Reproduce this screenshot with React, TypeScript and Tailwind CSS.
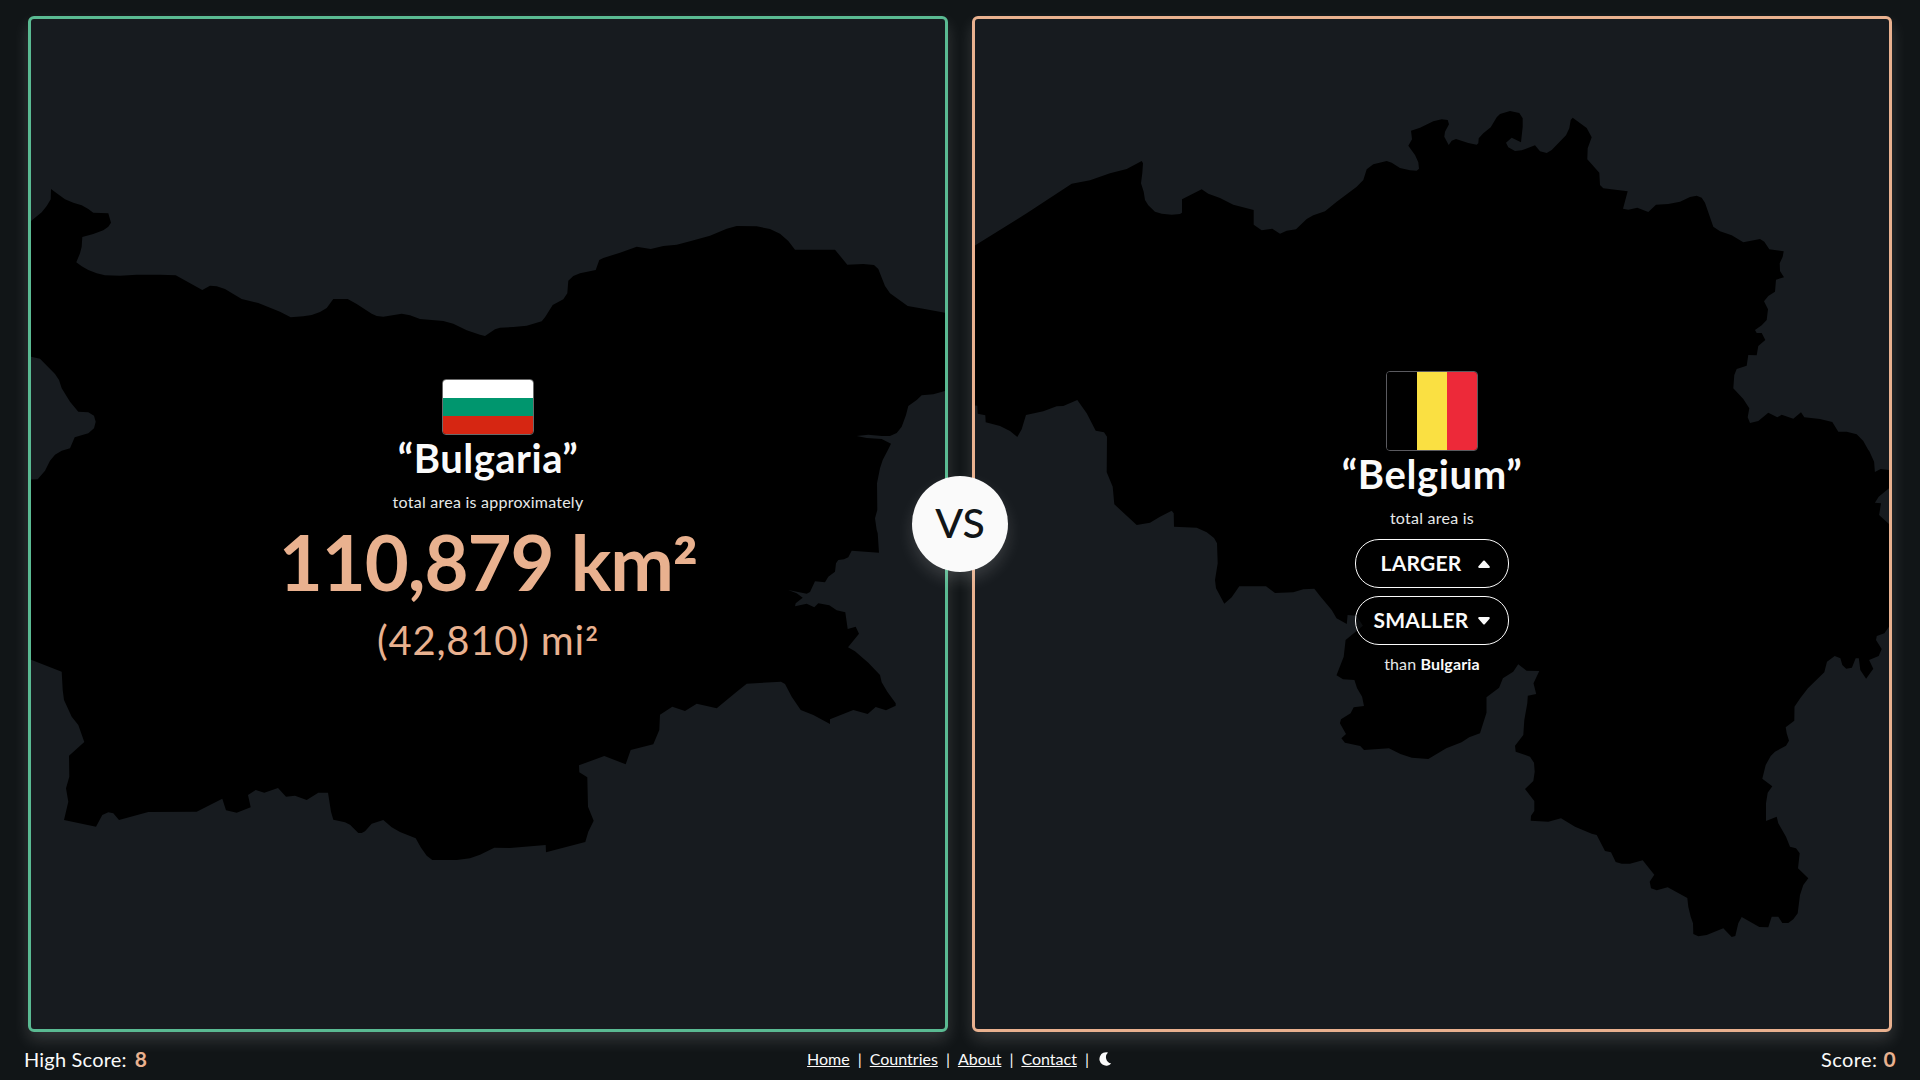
import type { ReactNode } from "react";
import { BsCaretDownFill, BsCaretUpFill } from "react-icons/bs";

type Stretch = { x: number; y: number; sx?: number; pts: string };

/** Turns stretches of border points (thirds of a pixel from an origin) into one closed path. */
function outline(stretches: Stretch[]): string {
  const points = stretches.flatMap(({ x, y, sx = 3, pts }) =>
    pts
      .trim()
      .split(/\s+/)
      .map((p) => {
        const [px, py] = p.split(",").map(Number);
        return `${(x + px / sx).toFixed(1)} ${(y + py / 3).toFixed(1)}`;
      }),
  );
  return `M${points.join("L")}Z`;
}

const BULGARIA = outline([
  {
    x: 0,
    y: 150,
    pts: "80,222 93,213 125,187 140,168 152,148 153,117 170,130 195,148 220,158 245,166 265,177 280,188 325,190 333,218 325,230 310,241 280,252 247,261 245,290 240,310 229,337 245,349 265,360 290,370 315,376 360,377 410,374 480,374 527,376 607,420 630,407 650,409 675,417 700,432 725,447 775,459 840,485 872,502 910,499 935,495 960,486 980,474 1000,447 1043,447 1070,462 1115,491 1130,498 1150,500 1205,491 1230,496 1260,507 1330,513 1360,521 1400,541 1440,554",
  },
  {
    x: 480,
    y: 200,
    pts: "15,408 45,388 60,383 100,381 140,377 185,364 195,352 218,315 250,298 262,280 265,242 280,228 300,220 347,210 358,180 370,174 420,158 470,140 512,147 550,138 590,134 630,124 690,107 740,86 770,78 830,79 870,87 900,101 925,123 945,149 1065,149 1102,194 1150,192 1182,195 1195,207 1215,258 1230,280 1283,318 1330,326 1396,338 1410,340 1410,570 1392,574 1360,583 1325,586 1310,600 1285,618 1278,645 1265,680 1250,699 1230,708 1205,708 1165,704 1130,708 1160,714 1205,717 1233,731 1225,748 1208,780 1200,805 1191,850 1192,930 1185,955 1190,990",
  },
  {
    x: 480,
    y: 520,
    pts: "1193,40 1197,98 1115,92 1105,112 1092,118 1075,120 1068,130 1065,155 1045,170 1035,187 1005,184 990,216 980,221 925,210 950,220 968,233 947,250 945,259 980,251 1003,262 1015,250 1048,256 1070,271 1096,277 1103,327 1127,320 1137,341 1104,382 1125,394 1165,428 1200,465 1205,487 1222,515 1247,550 1247,557 1218,571 1187,561 1163,582 1120,570 1050,598 1050,612 1000,585 962,570 935,530 915,492 903,485 800,491 770,515 710,565 650,551 615,573 577,560 540,584 538,630 520,673 452,690 437,733 373,708 297,736 298,757 322,772 324,860 341,902 325,935 316,966 198,997 197,975 90,984 43,983 0,1004",
  },
  {
    x: 0,
    y: 600,
    pts: "1410,775 1370,780 1297,780 1280,767 1262,742 1247,715 1200,696 1175,682 1150,660 1115,671 1095,694 1085,699 1075,699 1050,674 1035,667 1000,659 993,635 984,578 955,578 920,600 885,587 858,590 834,564 793,578 767,570 744,585 752,622 710,638 678,631 667,596 590,635 445,636 357,660 340,640 325,637 307,645 288,680 192,660 205,605 198,565 208,530 207,467 253,426 235,375 215,350 192,300 188,270 185,215 93,179 80,175",
  },
  {
    x: 0,
    y: 150,
    pts: "80,989 113,988 135,962 150,932 165,914 185,902 210,895 224,862 265,850 282,835 287,815 282,797 265,787 235,785 210,755 185,715 177,690 165,672 120,626 93,620 80,619",
  },
]);

const BELGIUM = outline([
  {
    x: 960,
    y: 90,
    pts: "36,470 46,466 200,370 335,281 390,271 450,250 500,237 545,213 549,220 547,250 543,280 551,305 555,330 565,346 585,365 605,371 635,374 660,372 666,368 666,328 725,298 745,311 780,324 820,344 881,360 881,404 905,421 937,416 960,431 980,422 1008,418 1040,387 1060,376 1095,364 1130,335 1190,290 1210,270 1220,238 1240,223 1280,213 1295,218 1320,234 1350,241",
  },
  {
    x: 1400,
    y: 90,
    pts: "50,242 57,236 55,217 45,195 25,167 36,148 33,122 60,113 100,94 125,88 143,90 147,103 135,125 133,140 146,165 155,152 168,147 205,159 230,164 235,160 236,145 250,130 272,112 290,82 300,72 330,63 358,69 368,85 368,110 363,157 335,143 318,158 325,172 345,183 365,181 405,166 420,184 440,189 455,180 498,136 508,115 512,90 518,83 560,114 575,142 563,175 562,208 598,248 600,285 610,295 683,304 669,356 685,359 712,353 745,366 768,344 805,342 840,335 870,321 890,317 905,323 915,338 940,410 960,424 995,436 1030,457 1080,447 1093,455 1108,478 1151,484 1148,500 1139,520 1140,543 1152,562 1128,569 1125,605 1105,618 1092,634 1104,658 1100,690 1085,706 1065,720 1070,729 1085,729 1096,750 1075,768 1070,796 1045,795 1040,827 1010,837 1003,855 1000,895 1030,927 1048,955 1043,982 1050,999 1075,993 1105,968 1132,982 1145,974 1180,986 1203,967 1213,982 1260,987 1297,996 1315,1025 1340,1025 1370,1033 1390,1053 1405,1080",
  },
  {
    x: 1320,
    y: 440,
    sx: 2.6133,
    pts: "1435,32 1448,65 1450,96 1465,87 1487,90 1500,91 1500,135 1487,145 1460,170 1450,188 1466,190 1461,225 1487,252 1500,262 1500,535 1487,560 1475,580 1455,588 1453,600 1468,627 1460,648 1435,660 1446,686 1427,716 1412,690 1408,655 1400,655 1390,683 1375,686 1365,675 1360,655 1345,648 1325,665 1318,697 1275,745 1255,775 1240,800",
  },
  {
    x: 1480,
    y: 700,
    pts: "943,62 917,82 920,100 927,122 918,137 885,155 872,168 857,195 847,236 877,259 863,278 858,310 858,363 890,350 895,370 918,410 930,440 948,445 959,460 954,505 985,535 970,555 960,585 953,640 940,658 925,669 907,669 895,650 875,650 865,682 838,681 785,651 775,670 766,708 755,711 730,685 680,705 655,709 640,702 639,670 632,650 625,620 622,594 563,562 530,571 513,565 509,545 523,524 488,481 450,491 425,491 407,486 393,457 375,453 350,405 335,401 285,380 243,355 205,365 152,362 153,347 163,333 163,303 135,267 160,243 164,215 162,188 150,170 107,155 105,137 130,105 133,60 142,10",
  },
  {
    x: 1320,
    y: 440,
    sx: 2.6133,
    pts: "543,767 565,762 558,730 573,693 540,692 518,673 505,695 478,715 468,743 435,772 435,818 418,880 390,892 370,907 330,925 283,957 240,953 210,942 180,925 115,930 105,918 65,908 56,895 68,882 52,850 55,838 80,820 88,802 115,798 110,770 97,745 90,720 60,718 43,706 62,650 67,600 112,557 95,527 72,525 70,552 43,535",
  },
  {
    x: 960,
    y: 380,
    pts: "1115,690 1080,648 1063,626 1030,628 1000,637 945,639 918,619 838,619 815,652 793,671 768,625 765,600 773,550 771,490 762,474 740,457 710,443 642,440 641,400 635,392 600,410 570,428 530,435 463,373 458,320 440,277 441,170 432,157 407,152 380,100 352,60 310,78 290,79 250,94 198,105 185,148 172,171 150,153 120,138 77,127 76,106 53,101 52,77 36,75",
  },
]);

function Card({ border, shape, viewBox, children }: { border: string; shape: string; viewBox: string; children: ReactNode }) {
  return (
    <section
      className={`relative flex h-[1016px] w-[920px] flex-col items-center overflow-hidden rounded-md border-3 bg-[#171b1f] shadow-[0_8px_16px_rgba(250,250,250,0.15)] ${border}`}
    >
      <svg className="absolute inset-0 size-full" viewBox={viewBox} aria-hidden="true">
        <path d={shape} fill="#000" />
      </svg>
      <div className="relative flex flex-col items-center">{children}</div>
    </section>
  );
}

function Guess({ label, icon }: { label: string; icon: ReactNode }) {
  return (
    <button className="flex h-[49px] w-[154px] items-center justify-center gap-1.5 rounded-[24px] border border-[#fafafa] bg-black/50 text-[21px] font-bold tracking-[0.2px] text-[#fafafa]">
      <span className="w-[99px] pb-0.5 text-center">{label}</span>
      {icon}
    </button>
  );
}

export default function App() {
  return (
    <div className="flex h-[1080px] w-[1920px] flex-col overflow-hidden bg-[#111517] pt-4 font-['Lato',sans-serif] text-[#fafafa]">
      <main className="relative flex justify-center gap-6">
        <Card border="border-[#5aba92]" shape={BULGARIA} viewBox="31 19 914 1010">
          <div className="mt-[360px] flex h-14 w-[92px] flex-col overflow-hidden rounded-[4px] border border-[#6a6a6a]">
            <div className="flex-1 bg-white" />
            <div className="flex-1 bg-[#00966e]" />
            <div className="flex-1 bg-[#d62612]" />
          </div>
          <h2 className="-mt-px text-[40px] leading-12 font-bold tracking-[0.5px]">“Bulgaria”</h2>
          <p className="mt-2 text-base leading-6 tracking-[0.25px] text-[#e6e8e8]">total area is approximately</p>
          <p className="h-24 text-[76px] leading-[96px] font-bold tracking-[-1.1px] text-[#e9b18f]">
            110,879 km<span className="inline-block align-[-0.1em] leading-none">²</span>
          </p>
          <p className="mt-1.5 h-12 text-[40px] leading-12 tracking-[0.8px] text-[#e9b18f]">
            (42,810) mi<span className="inline-block align-[-0.1em] leading-none">²</span>
          </p>
        </Card>
        <Card border="border-[#e9b18f]" shape={BELGIUM} viewBox="975 19 914 1010">
          <div className="mt-[352px] flex h-20 w-[92px] overflow-hidden rounded-[4px] border border-[#5a5a5f]">
            <div className="flex-1 bg-black" />
            <div className="flex-1 bg-[#fae042]" />
            <div className="flex-1 bg-[#ed2939]" />
          </div>
          <h2 className="-mt-px text-[40px] leading-12 font-bold tracking-[0.6px]">“Belgium”</h2>
          <p className="mt-2 text-base leading-6 tracking-[0.25px] text-[#e6e8e8]">total area is</p>
          <div className="mt-[9px] flex flex-col gap-2">
            <Guess label="LARGER" icon={<BsCaretUpFill className="size-4" />} />
            <Guess label="SMALLER" icon={<BsCaretDownFill className="size-4" />} />
          </div>
          <p className="mt-[7px] text-base leading-6 tracking-[0.15px] text-[#e6e8e8]">
            than <b className="text-[#fafafa]">Bulgaria</b>
          </p>
        </Card>
        <div className="absolute top-[460px] left-[912px] flex size-24 items-center justify-center rounded-full bg-[#fafafa] pb-0.5 text-[41px] font-medium text-[#111517] shadow-[0_8px_16px_rgba(250,250,250,0.15)]">
          VS
        </div>
      </main>
      <footer className="grid h-12 grid-cols-3 items-center px-6 pt-1.5 text-xl">
        <div className="flex gap-2 tracking-[0.2px]">
          High Score: <b className="text-[21px] leading-7 text-[#e9b18f]">8</b>
        </div>
        <nav className="flex items-center justify-center gap-2 text-base">
          <a className="underline">Home</a>|
          <a className="underline">Countries</a>|
          <a className="underline">About</a>|
          <a className="underline">Contact</a>|
          <svg className="size-4" viewBox="0 0 16 16" fill="currentColor" aria-label="Dark mode">
            <path d="M11 1.4A6.8 6.8 0 1 0 14.2 12.6A6.6 6.6 0 0 1 11 1.4Z" />
          </svg>
        </nav>
        <div className="flex justify-end gap-1.5 tracking-[0.4px]">
          Score: <b className="text-[21px] leading-7 text-[#e9b18f]">0</b>
        </div>
      </footer>
    </div>
  );
}
